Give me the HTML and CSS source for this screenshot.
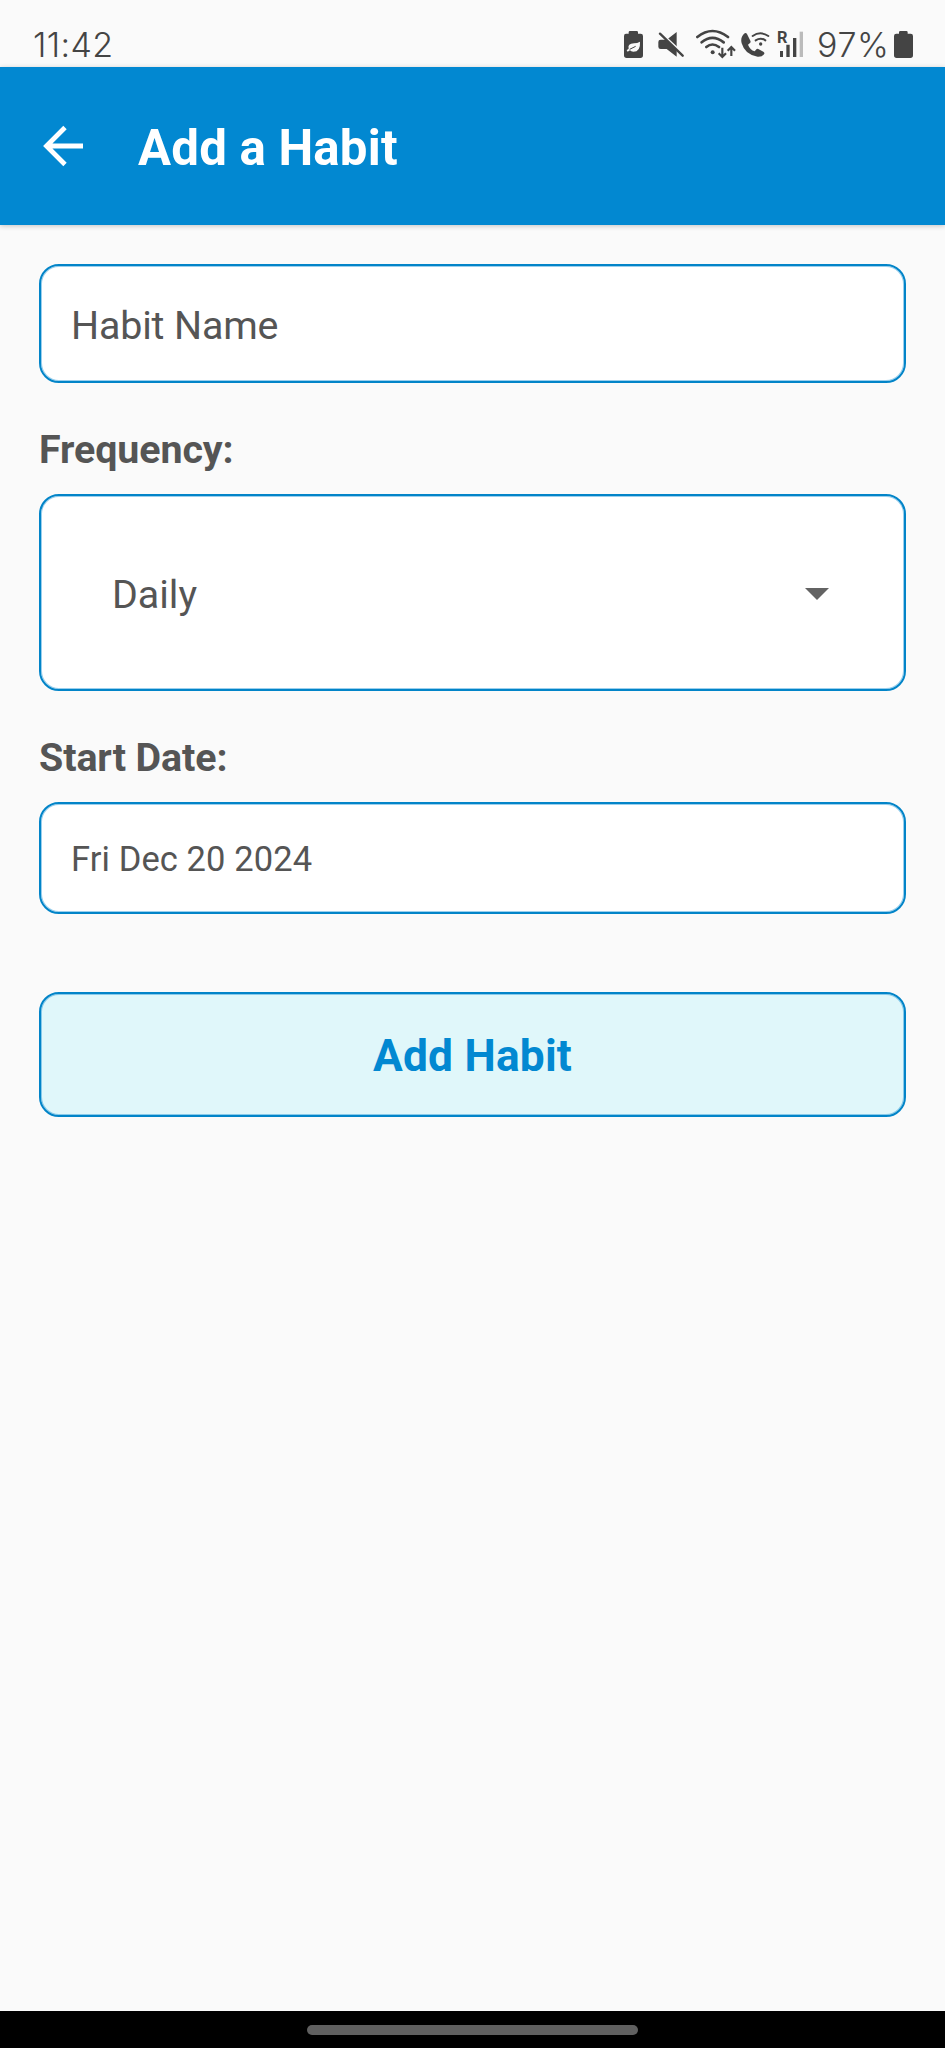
FILE: index.html
```html
<!DOCTYPE html>
<html lang="en">
<head>
<meta charset="utf-8">
<title>Add a Habit</title>
<link rel="stylesheet" href="styles.css">
</head>
<body>
<div class="screen">
  <div class="status">
    <span class="clock">11:42</span>
    <div class="status-icons">
      <svg class="i-saver" width="21" height="30" viewBox="39 42 63 90"><path fill="#444" d="M48 56h8v-4q0-4 4-4h20q4 0 4 4v4h8q7 0 7 7v58q0 8-8 8H50q-8 0-8-8V63q0-7 6-7z"/><path fill="#fafafa" d="M90 80q2 30-20 30-7 0-10-4l-7 4-3-4 6-5q-4-15 16-16 10 0 18-5z"/><path d="M59 103l18-9" stroke="#444" stroke-width="3"/></svg>
      <svg class="i-mute" width="26" height="30" viewBox="144 42 78 90"><path fill="#444" d="M200 51v74l-30-23h-18q-7 0-7-7V81q0-7 7-7h18z"/><path d="M145 48l78 72" stroke="#fafafa" stroke-width="8"/><path d="M150 56l68 66" stroke="#444" stroke-width="7" stroke-linecap="round"/></svg>
      <svg class="i-wifi" width="40" height="30" viewBox="258 42 120 90"><g fill="none" stroke="#444" stroke-width="8" stroke-linecap="round"><path d="M262 66q45-36 92 0M275 82q32-27 66 0M289 96q18-15 38 0"/><path stroke-width="6.500" stroke-linecap="butt" d="M337 98v28M326 115l11 11 11-11M364 123V96M353 107l11-11 11 11"/></g><circle cx="308" cy="112" r="6" fill="#444"/></svg>
      <svg class="i-call" width="29" height="30" viewBox="393 42 87 90"><path fill="#444" d="M404 55q-14 12-9 30 10 35 48 40 14 1 20-9 1-4-3-6l-15-8q-4-2-7 2l-4 5q-14-5-20-20l6-5q3-3 1-7l-10-20q-3-5-7-2z"/><g fill="none" stroke="#444" stroke-width="6" stroke-linecap="round"><path d="M428 63q23-16 47 0M437 76q15-10 29 0"/></g><circle cx="452" cy="87" r="5" fill="#444"/></svg>
      <svg class="i-signal" width="27" height="30" viewBox="21 42 81 90"><text class="roam" x="21" y="84">R</text><path fill="#444" d="M30 108h9v18h-9zM49 89h10v37H49zM69 69h10v57H69z"/><path fill="#bbb" d="M89 50h10v76H89z"/></svg>
    </div>
    <span class="percent">97%</span>
    <svg class="i-battery" width="19" height="30" viewBox="372 42 57 90"><path fill="#444" d="M379 56h8v-4q0-4 4-4h18q4 0 4 4v4h9q7 0 7 7v58q0 8-8 8h-41q-8 0-8-8V63q0-7 7-7z"/></svg>
  </div>
  <header class="appbar">
    <svg class="back" width="42" height="42" viewBox="0 0 42 42"><path d="M40 21H5M22 2.500L3.500 21 22 39.500" fill="none" stroke="#fff" stroke-width="4.800"/></svg>
    <h1 class="title">Add a Habit</h1>
  </header>
  <main class="form">
    <div class="box name">Habit Name</div>
    <div class="label">Frequency:</div>
    <div class="box select"><span>Daily</span><svg width="24" height="12" viewBox="0 0 24 12"><path d="M0 0h24L12 12z" fill="#636363"/></svg></div>
    <div class="label">Start Date:</div>
    <div class="box date">Fri Dec 20 2024</div>
    <div class="box submit">Add Habit</div>
  </main>
  <div class="nav"><div class="pill"></div></div>
</div>
</body>
</html>
```
FILE: styles.css
```css
body { margin: 0; }
.screen {
  width: 945px;
  height: 2048px;
  display: flex;
  flex-direction: column;
  background: #fafafa;
  color: #555;
  font-family: Roboto, sans-serif;
  overflow: hidden;
}
.status {
  height: 67px;
  flex: none;
  box-sizing: border-box;
  padding: 29px 32px 0 33px;
  display: flex;
  align-items: flex-start;
  color: #444;
  font-family: Inter, sans-serif;
  font-size: 34px;
  line-height: 32px;
}
.clock { letter-spacing: 0.4px; font-weight: 300; }
.status-icons { display: flex; margin-left: auto; }
.status svg { flex: none; display: block; }
.i-mute { margin-left: 14px; }
.i-wifi { margin-left: 12px; }
.i-call { margin-left: 5px; }
.i-signal { margin-left: 7px; }
.roam { font: 700 49px Roboto, sans-serif; fill: #444; }
.percent { width: 77px; margin-left: 13px; letter-spacing: 0.6px; font-weight: 300; }
.appbar {
  height: 158px;
  flex: none;
  display: flex;
  align-items: center;
  background: #0288d1;
  box-shadow: 0 1px 5px rgba(0, 0, 0, 0.22);
}
.back { margin-left: 43px; }
.title {
  margin: 4px 0 0 53px;
  color: #fff;
  font-size: 49.2px;
  line-height: 58px;
  font-weight: 700;
  letter-spacing: 0.2px;
}
.form {
  flex: 1;
  padding: 39px 39px 0;
  display: flex;
  flex-direction: column;
}
.box {
  box-sizing: border-box;
  border: 2px solid #0284c8;
  border-radius: 20px;
  box-shadow: inset 0 0 0 1px rgba(2, 136, 209, 0.4);
  background: #fff;
  display: flex;
  align-items: center;
  font-size: 39.4px;
}
.name { height: 119px; padding: 4px 30px 0; letter-spacing: -0.15px; }
.label {
  font-size: 39.4px;
  line-height: 46px;
  font-weight: 700;
  letter-spacing: -0.1px;
  margin: 44px 0 21px;
}
.select { height: 197px; padding: 2px 75px 0 71px; justify-content: space-between; }
.select span { padding-top: 2px; }
.date { height: 112px; padding: 2px 30px 0; font-size: 34.5px; letter-spacing: 0.1px; }
.submit {
  height: 125px;
  margin-top: 78px;
  padding-top: 2px;
  background: #e0f7fa;
  justify-content: center;
  color: #0288d1;
  font-size: 44.3px;
  font-weight: 700;
  letter-spacing: 0.2px;
}
.nav {
  height: 37px;
  flex: none;
  display: flex;
  justify-content: center;
  background: #000;
}
.pill { width: 331px; height: 10px; margin-top: 14px; border-radius: 5px; background: #606060; }
```
